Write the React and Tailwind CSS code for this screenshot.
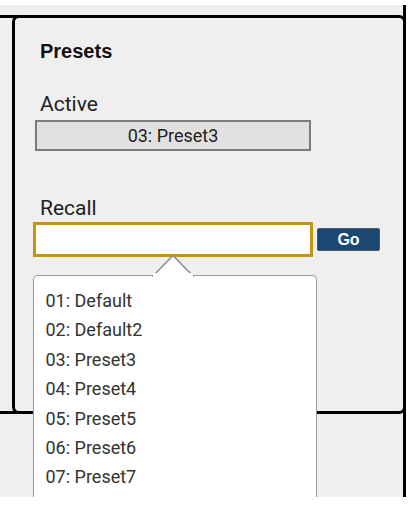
import React from 'react';

const PRESETS = [
  '01: Default',
  '02: Default2',
  '03: Preset3',
  '04: Preset4',
  '05: Preset5',
  '06: Preset6',
  '07: Preset7',
];

const App = () => {
  return (
    <div className="h-[505px] w-[414px] bg-white pt-[5px] font-['Roboto',sans-serif] text-[#222]">
      <div className="relative h-[492px] w-[406px] border-r-[3px] border-black bg-[#efefef] pt-[10px] pl-[12px]">
        {/* frame stubs on the left */}
        <div className="absolute left-0 top-[10px] h-[3px] w-[18px] bg-black" />
        <div className="absolute left-0 top-[406px] h-[3px] w-[18px] bg-black" />

        {/* Presets panel */}
        <div className="relative h-[399px] w-[394px] rounded-[7px] border-[3px] border-black bg-[#efefef] pt-[21px]">
          <h2 className="pl-[25px] font-['Liberation_Sans',Arial,sans-serif] text-[20px] font-bold leading-[24px] text-[#111]">
            Presets
          </h2>

          <div className="mt-[29px] pl-[25px] text-[21px] leading-[24px]">Active</div>
          <div className="ml-[20px] mt-[4px] flex h-[31px] w-[276px] items-center justify-center border-2 border-[#7c7c7c] bg-[#e1e1e1] text-[18px]">
            03: Preset3
          </div>

          <div className="mt-[45px] pl-[25px] text-[21px] leading-[24px]">Recall</div>
          <div className="relative ml-[18px] mt-[2px] flex items-center">
            <input
              type="text"
              className="h-[35px] w-[280px] border-[3px] border-[#c6950f] bg-white outline-none"
            />
            <button className="ml-[4px] flex h-[23px] w-[63px] items-center justify-center rounded-[2px] border border-[#4a5a6a] bg-[#1b4872] font-['Liberation_Sans',Arial,sans-serif] text-[16px] font-bold text-white">
              Go
            </button>

            {/* Dropdown list */}
            <div className="absolute left-[-0.5px] top-[53px] z-10 h-[222px] w-[284px]">
              <svg
                className="absolute left-[119px] top-[-21px]"
                width="42"
                height="23"
                viewBox="0 0 42 23"
              >
                <polygon points="1,22 21,1.5 41,22" fill="white" stroke="#8a8a8a" strokeWidth="1.5" />
              </svg>
              <div className="h-full overflow-hidden rounded-t-[5px] border border-b-0 border-[#9a9a9a] bg-white pl-[12px] pt-[10px]">
                {PRESETS.map((p) => (
                  <div key={p} className="text-[18px] leading-[29.4px] text-[#333]">
                    {p}
                  </div>
                ))}
              </div>
              <svg
                className="absolute left-[120px] top-[-2px]"
                width="40"
                height="4"
                viewBox="0 0 40 4"
              >
                <rect x="0" y="0" width="40" height="4" fill="white" />
              </svg>
            </div>
          </div>
        </div>
      </div>
    </div>
  );
};

export default App;
